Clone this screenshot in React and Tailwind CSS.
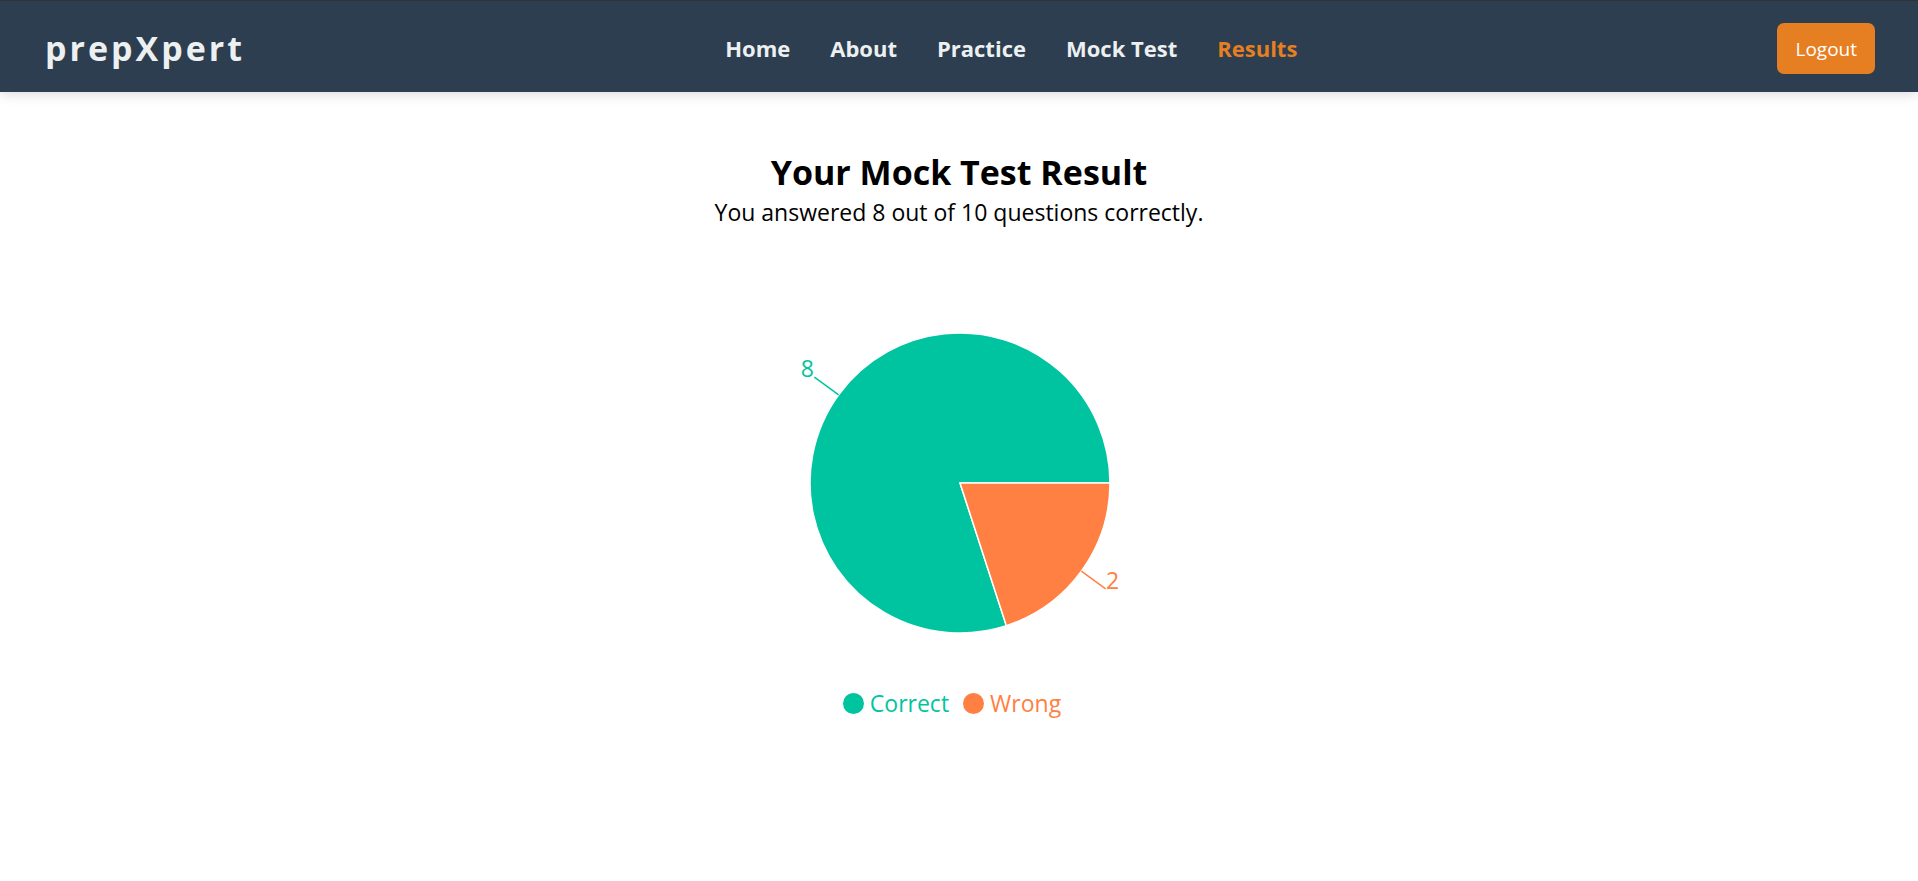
const LINKS = [
  { label: "Home", href: "#home" },
  { label: "About", href: "#about" },
  { label: "Practice", href: "#practice" },
  { label: "Mock Test", href: "#mock-test" },
  { label: "Results", href: "#results", active: true },
];

function Header() {
  return (
    <header className="flex h-[92px] items-center justify-between border-t border-[#333333] bg-[#2c3e50] pt-[3px] pr-[43px] pl-[45px] shadow-[0_2px_12px_rgba(0,0,0,0.15)]">
      <a href="#home" className="text-[34px] leading-[48px] font-bold tracking-[3px] text-[#ecf0f1]">
        prepXpert
      </a>
      <nav aria-label="Main">
        <ul className="flex items-center gap-10">
          {LINKS.map((link) => (
            <li key={link.label}>
              <a
                href={link.href}
                aria-current={link.active ? "page" : undefined}
                className={
                  link.active
                    ? "text-[22px] leading-8 font-bold text-[#e67e22]"
                    : "text-[22px] leading-8 font-bold text-[#ecf0f1]"
                }
              >
                {link.label}
              </a>
            </li>
          ))}
        </ul>
      </nav>
      <button type="button" className="rounded-[7px] bg-[#e67e22] px-[18px] pt-3 pb-[11px] text-[19px] leading-7 text-white">
        Logout
      </button>
    </header>
  );
}

function ResultPie() {
  return (
    <svg
      viewBox="-1 0 500 400"
      role="img"
      aria-label="8 correct, 2 wrong"
      className="mt-[55px] h-[400px] w-[500px] max-w-full text-[23px]"
    >
      <g stroke="#fff" strokeWidth="1.5">
        <path d="M250 200 L400 200 A150 150 0 1 0 296.35 342.66 Z" fill="#00C49F" />
        <path d="M250 200 L296.35 342.66 A150 150 0 0 0 400 200 Z" fill="#FF8042" />
      </g>
      <path d="M128.65 111.83 L104.38 94.2" stroke="#00C49F" strokeWidth="1.5" />
      <path d="M371.35 288.17 L395.62 305.8" stroke="#FF8042" strokeWidth="1.5" />
      <text x="104" y="94" textAnchor="end" fill="#00C49F">8</text>
      <text x="396" y="306" fill="#FF8042">2</text>
    </svg>
  );
}

export default function App() {
  return (
    <div className="min-h-screen bg-white font-['Open_Sans','Noto_Sans',sans-serif] text-black">
      <Header />
      <main className="flex flex-col items-center pt-[56px] text-center">
        <h1 className="text-[34px] leading-[48px] font-bold">Your Mock Test Result</h1>
        <p className="text-[23px] leading-8">You answered 8 out of 10 questions correctly.</p>
        <ResultPie />
        <ul className="mt-1 flex gap-[14px] pr-[14px] text-[23px] leading-8">
          <li className="flex items-center gap-[6px] text-[#00C49F]">
            <span className="size-[21px] rounded-full bg-[#00C49F]" />
            Correct
          </li>
          <li className="flex items-center gap-[6px] text-[#FF8042]">
            <span className="size-[21px] rounded-full bg-[#FF8042]" />
            Wrong
          </li>
        </ul>
      </main>
    </div>
  );
}
